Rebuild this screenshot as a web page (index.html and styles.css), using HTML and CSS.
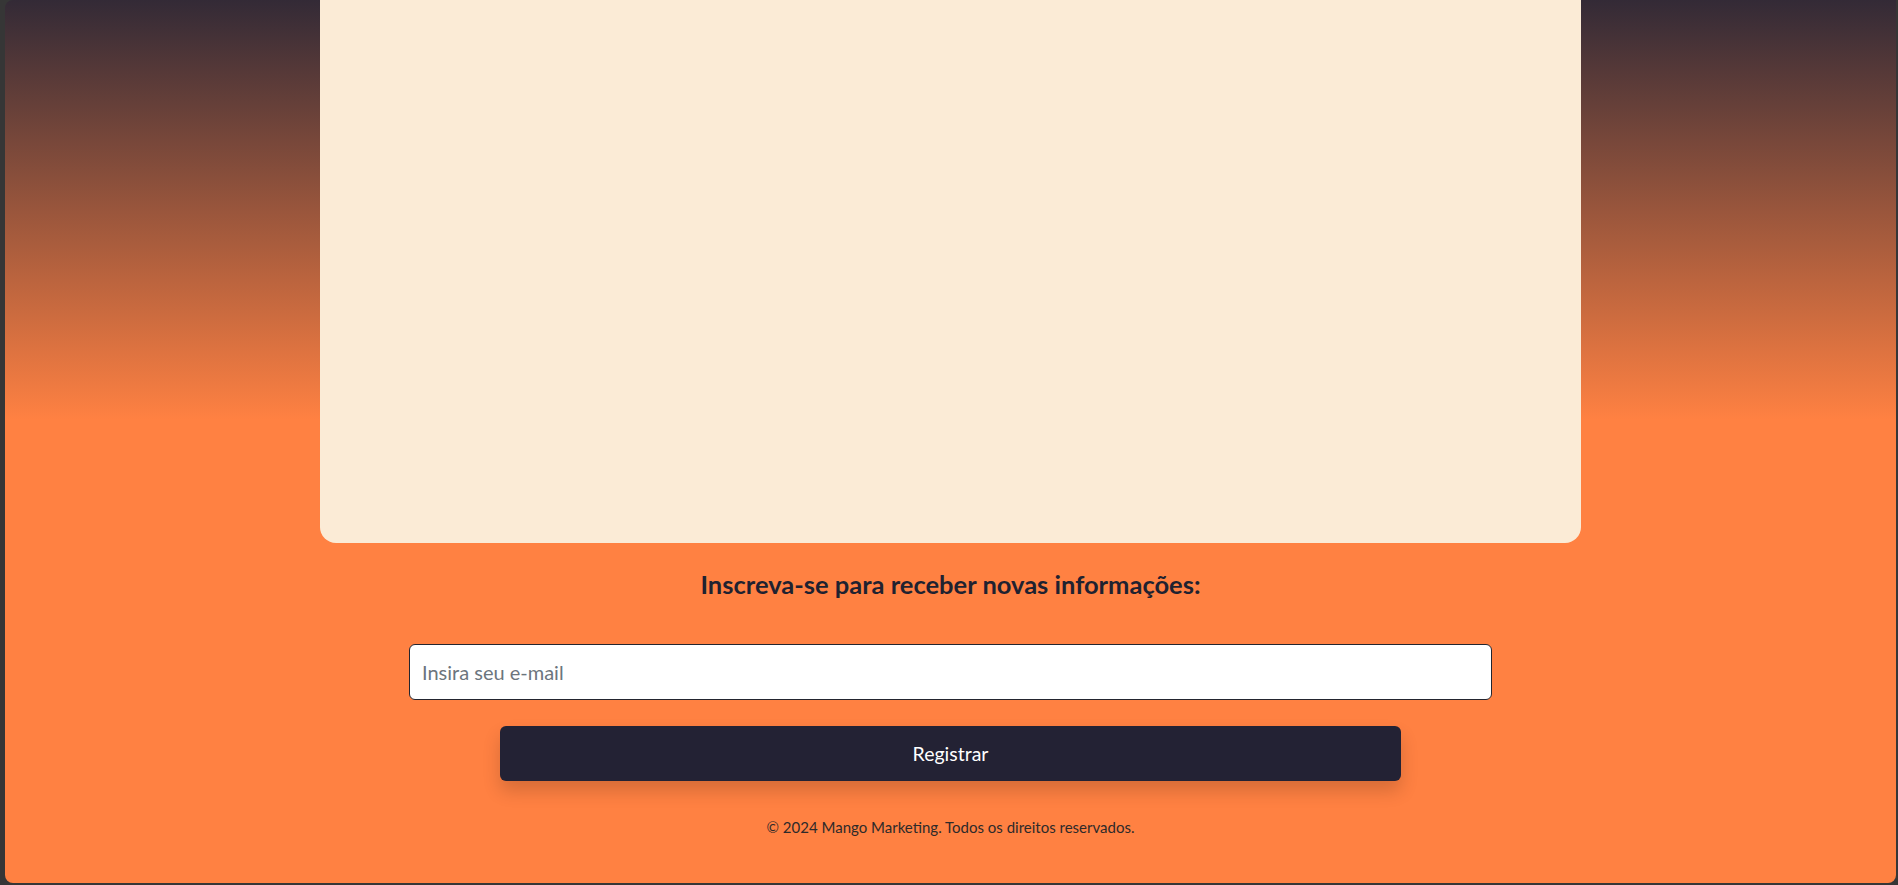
FILE: index.html
```html
<!DOCTYPE html>
<html lang="pt-BR">
<head>
<meta charset="utf-8">
<title>Mango Marketing</title>
<link rel="stylesheet" href="styles.css">
</head>
<body>
<div class="window">
  <main class="page">
    <section class="card"></section>
    <section class="subscribe">
      <h2 class="subscribe-title">Inscreva-se para receber novas informações:</h2>
      <form class="subscribe-form" onsubmit="return false;">
        <input class="email-input" type="email" placeholder="Insira seu e-mail">
        <button class="btn-register" type="submit">Registrar</button>
      </form>
    </section>
    <footer class="footer">© 2024 Mango Marketing. Todos os direitos reservados.</footer>
  </main>
</div>
</body>
</html>
```
FILE: styles.css
```css
html, body {
  margin: 0;
  padding: 0;
  height: 100%;
}

body {
  background: #363636;
  font-family: "Lato", "Open Sans", sans-serif;
  overflow: hidden;
}

.window {
  margin: 0 2px 2px 5px;
  height: 883px;
  border-radius: 8px 0 8px 8px;
  overflow: hidden;
  background: linear-gradient(to bottom, #332a36 0px, #ff8142 420px, #ff8142 100%);
}

.page {
  display: flex;
  flex-direction: column;
  align-items: center;
}

.card {
  width: 1261px;
  height: 543px;
  background: #fbebd6;
  border-radius: 0 0 16px 16px;
}

.subscribe {
  display: flex;
  flex-direction: column;
  align-items: center;
  width: 100%;
}

.subscribe-title {
  margin: 26px 0 0;
  font-size: 25.5px;
  line-height: 1.2;
  font-weight: 700;
  color: #1f2230;
}

.subscribe-form {
  display: flex;
  flex-direction: column;
  align-items: center;
  margin-top: 44px;
}

.email-input {
  box-sizing: border-box;
  width: 1083px;
  height: 56px;
  padding: 0 12px;
  border: 1px solid #23252f;
  border-radius: 6px;
  background: #fff;
  font-family: "Lato", "Open Sans", sans-serif;
  font-size: 20px;
  color: #212529;
  outline: none;
}

.email-input::placeholder {
  color: #6c757d;
  opacity: 1;
}

.btn-register {
  box-sizing: border-box;
  width: 901px;
  height: 55px;
  margin-top: 26px;
  border: 0;
  border-radius: 6px;
  background: #232234;
  color: #ffffff;
  font-family: "Lato", "Open Sans", sans-serif;
  font-size: 19.5px;
  cursor: pointer;
  box-shadow: 0 10px 18px rgba(0, 0, 0, 0.16);
}

.footer {
  margin-top: 37px;
  font-size: 15px;
  line-height: 1.2;
  color: #2e2a2a;
}
```
